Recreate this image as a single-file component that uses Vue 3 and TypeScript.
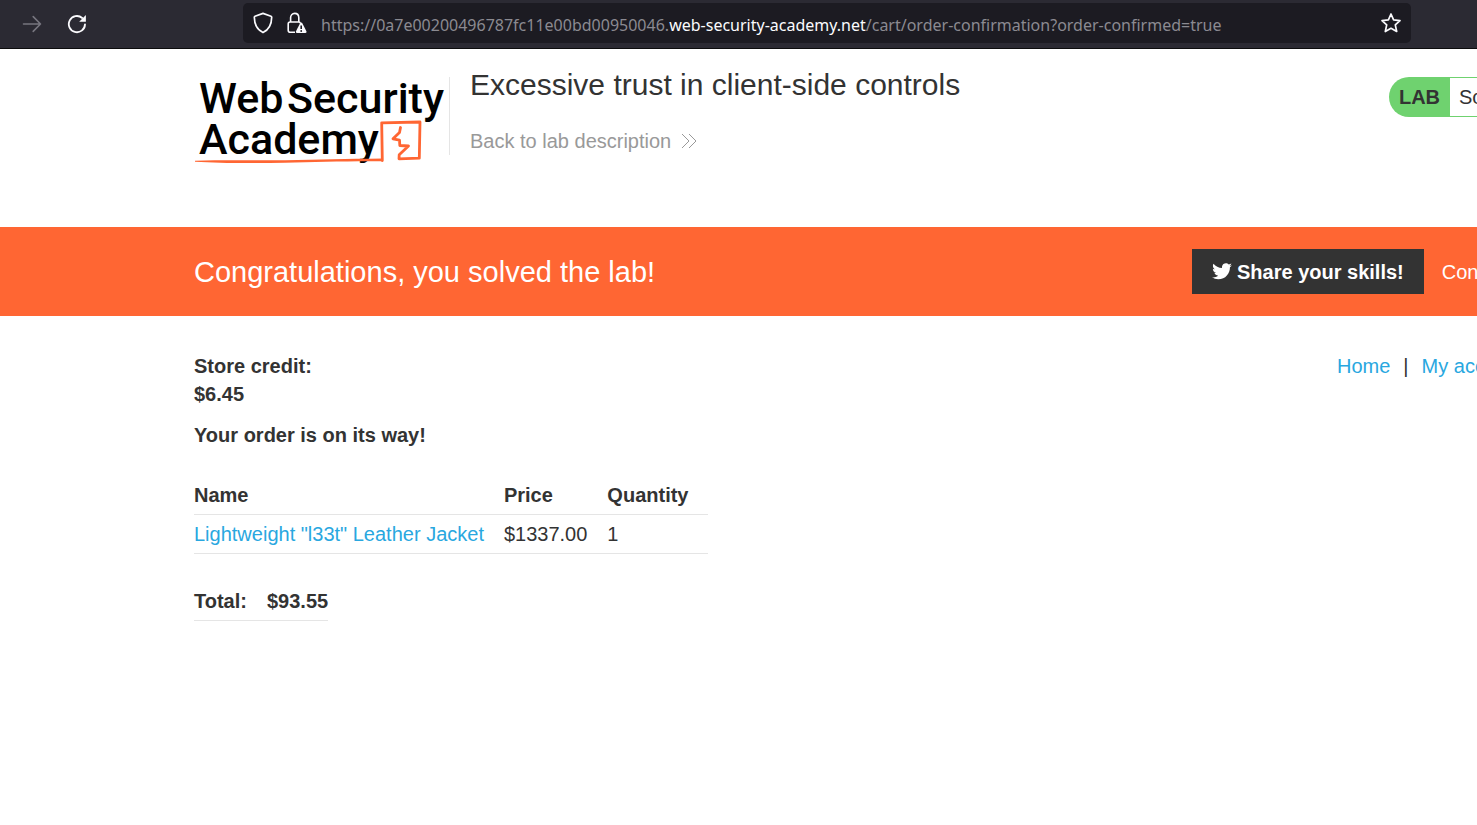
<script setup lang="ts">
interface OrderLine {
  name: string
  price: string
  quantity: number
}

const url = {
  prefix: 'https://0a7e00200496787fc11e00bd00950046.',
  domain: 'web-security-academy.net',
  path: '/cart/order-confirmation?order-confirmed=true',
}

const storeCredit = '$6.45'
const total = '$93.55'
const lines: OrderLine[] = [
  { name: 'Lightweight "l33t" Leather Jacket', price: '$1337.00', quantity: 1 },
]
</script>

<template>
  <div class="window">
    <nav class="toolbar" aria-label="Browser toolbar">
      <div class="nav-buttons">
        <button type="button" class="icon-button" aria-label="Forward" disabled>
          <svg width="20" height="20" viewBox="0 0 20 20" fill="none" stroke="#77767f" stroke-width="1.6" stroke-linecap="round" stroke-linejoin="round">
            <path d="M1.5 10H18.5M11.2 2.600L18.500 10L11.200 17.400" />
          </svg>
        </button>
        <button type="button" class="icon-button" aria-label="Reload">
          <svg width="20" height="20" viewBox="0 0 20 20" fill="none" stroke="#fbfbfe" stroke-width="1.8" stroke-linecap="round">
            <path d="M18 10.400A8.100 8.100 0 1 1 15.200 4" />
            <path d="M18.900 1V7.700H12.200Z" fill="#fbfbfe" stroke="none" />
          </svg>
        </button>
      </div>
      <div class="address-bar">
        <button type="button" class="icon-button" aria-label="Tracking protection">
          <svg width="20" height="22" viewBox="0 0 20 22" fill="none" stroke="#fbfbfe" stroke-width="1.7" stroke-linejoin="round">
            <path d="M10 1.4L18 4.2C18.5 4.4 18.7 4.8 18.7 5.3C18.6 12 16.4 17.6 10 20.6C3.6 17.6 1.4 12 1.3 5.3C1.3 4.8 1.5 4.4 2 4.2Z" />
          </svg>
        </button>
        <button type="button" class="icon-button" aria-label="Connection security">
          <svg width="20" height="22" viewBox="0 0 20 22" fill="none">
            <path d="M8 20.2H3.2C2 20.2 1.2 19.4 1.2 18.2V12C1.2 10.8 2 10 3.2 10H11.6C12.4 10 13 10.4 13.4 11" stroke="#fbfbfe" stroke-width="1.6" />
            <path d="M3.6 10V5.8C3.6 3.3 5.2 1.4 7.7 1.4C10.2 1.4 11.8 3.3 11.8 5.8V10" stroke="#fbfbfe" stroke-width="1.6" />
            <path d="M13.2 11.1C13.7 10.2 14.7 10.2 15.2 11.1L19.4 19.3C19.8 20.1 19.3 21 18.4 21H10C9.1 21 8.6 20.1 9 19.3Z" fill="#fbfbfe" />
            <path d="M14.2 13.6V17" stroke="#1c1b22" stroke-width="1.6" />
            <circle cx="14.2" cy="19" r="0.9" fill="#1c1b22" />
          </svg>
        </button>
        <div class="url" role="textbox" aria-label="Address" contenteditable="true" spellcheck="false">{{ url.prefix }}<span class="domain">{{ url.domain }}</span>{{ url.path }}</div>
        <button type="button" class="icon-button" aria-label="Bookmark this page">
          <svg width="22" height="22" viewBox="0 0 22 22" fill="none" stroke="#fbfbfe" stroke-width="1.7" stroke-linejoin="round">
            <path d="M11 2L13.6 7.9L20 8.6L15.3 12.9L16.7 19.5L11 16.3L5.3 19.5L6.7 12.9L2 8.6L8.4 7.9Z" />
          </svg>
        </button>
      </div>
    </nav>

    <header class="lab-header">
      <a href="#" class="logo" aria-label="Web Security Academy">
        <svg width="250" height="92" viewBox="0 0 250 92">
          <g class="logo-text">
            <text x="4" y="36">Web</text>
            <text x="92" y="36">Security</text>
            <text x="4" y="77">Academy</text>
          </g>
          <path d="M187.300 83.500L186.700 45.800L225 45L224.300 81.200L204 81.800L204.200 77.700L213.500 69L204.800 68.500L204.500 63.200L198 61.800L204.500 55.500L205.500 50.500" fill="none" stroke="#ff6633" stroke-width="2.8" stroke-linejoin="round" stroke-linecap="round" />
          <path d="M0 83.800C30 82.800 60 83.600 90 83.200C125 82.800 150 82 188 81.600V84.300C150 84 120 85.200 90 85.800C60 86.200 25 86.400 0 84.800Z" fill="#ff6633" />
        </svg>
      </a>
      <div class="title">
        <h2>Excessive trust in client-side controls</h2>
        <a href="#" class="back-link">Back to lab description
          <svg width="16" height="16" viewBox="0 0 16 16" fill="none" stroke="#999999" stroke-width="1">
            <path d="M1 1L8 8L1 15M8 1L15 8L8 15" />
          </svg>
        </a>
      </div>
      <div class="status edge">
        <span class="status-label">LAB</span>
        <p class="status-value">Solved</p>
      </div>
    </header>

    <section class="banner">
      <h4>Congratulations, you solved the lab!</h4>
      <div class="banner-actions edge">
        <button type="button" class="share">
          <svg width="20" height="17" viewBox="0 0 24 20" fill="#ffffff">
            <path d="M24 2.400C23.100 2.800 22.200 3 21.200 3.200C22.200 2.500 23 1.500 23.300 .4C22.400 1 21.300 1.400 20.200 1.600C18.400-.4 15.600-.5 13.700 1.100C12.300 2.300 11.700 4.100 12.100 5.900C8 5.700 4.300 3.700 1.800 .7C.4 3 1.200 5.900 3.300 7.300C2.500 7.200 1.700 7 1 6.600C1 9 2.700 11.100 5 11.500C4.300 11.700 3.500 11.700 2.800 11.600C3.400 13.500 5.200 15 7.400 15C5.300 16.600 2.700 17.300 0 17C2.200 18.400 4.800 19.300 7.500 19.300C16.700 19.300 21.800 11.500 21.500 4.800C22.500 4.200 23.300 3.300 24 2.400Z" />
          </svg>
          Share your skills!
        </button>
        <a href="#" class="continue">Continue shopping</a>
      </div>
    </section>

    <main class="content">
      <div class="account-row">
        <p class="credit"><strong>Store credit:<br>{{ storeCredit }}</strong></p>
        <nav class="links edge" aria-label="Account">
          <a href="#">Home</a><span>|</span><a href="#">My account</a>
        </nav>
      </div>
      <p class="notice"><strong>Your order is on its way!</strong></p>
      <table class="order">
        <thead>
          <tr><th scope="col">Name</th><th scope="col">Price</th><th scope="col">Quantity</th></tr>
        </thead>
        <tbody>
          <tr v-for="line in lines" :key="line.name">
            <td><a href="#">{{ line.name }}</a></td>
            <td>{{ line.price }}</td>
            <td>{{ line.quantity }}</td>
          </tr>
        </tbody>
      </table>
      <table class="total">
        <tbody>
          <tr><th scope="row">Total:</th><th>{{ total }}</th></tr>
        </tbody>
      </table>
    </main>
  </div>
</template>

<style>
body {
  margin: 0;
  background: #ffffff;
}
</style>

<style scoped>
.window {
  min-height: 100vh;
  overflow: hidden;
  color: #333333;
  font: 20px/28px "Liberation Sans", Arial, sans-serif;
}

h2, h4, p {
  margin: 0;
  font-weight: normal;
}

a {
  color: #29a7df;
  text-decoration: none;
}

button {
  border: 0;
  padding: 0;
  font: inherit;
  background: none;
}

svg {
  display: block;
  flex: none;
}

.toolbar {
  display: flex;
  box-sizing: border-box;
  height: 49px;
  padding: 3px 66px 5px 22px;
  border-bottom: 1px solid #0c0c0d;
  background: #2b2a33;
}

.nav-buttons {
  display: flex;
  flex: 0 0 221px;
  align-items: center;
  gap: 25px;
  padding-top: 2px;
}

.address-bar {
  display: flex;
  flex: 1;
  min-width: 0;
  align-items: center;
  padding: 0 9px 0 10px;
  gap: 14px;
  border-radius: 5px;
  background: #1c1b22;
}

.url {
  flex: 1;
  min-width: 0;
  padding-top: 4px;
  overflow: hidden;
  color: #8b8a91;
  font: 16px/28px "Noto Sans", sans-serif;
  white-space: nowrap;
  outline: none;
}

.domain {
  color: #fbfbfe;
}

.edge {
  flex-shrink: 0;
  margin-left: auto;
  white-space: nowrap;
}

.lab-header {
  display: flex;
  align-items: flex-start;
  height: 150px;
  padding: 28px 0 0 195px;
}

.logo {
  flex: none;
  margin-right: 4px;
}

.logo-text {
  fill: #000000;
  font: 500 43px Roboto, sans-serif;
}

.title {
  display: flex;
  flex-direction: column;
  height: 78px;
  gap: 20px;
  padding-left: 20px;
  border-left: 1px solid #e5e5e5;
}

.title h2 {
  margin-top: -8px;
  font-size: 30px;
  line-height: 32px;
}

.back-link {
  display: flex;
  align-items: center;
  gap: 10px;
  margin-top: 6px;
  color: #999999;
}

.status {
  display: flex;
  width: 88px;
}

.status-label {
  flex: none;
  width: 61px;
  border-radius: 20px 0 0 20px;
  background: #6fd26f;
  font-weight: bold;
  line-height: 40px;
  text-align: center;
}

.status-value {
  flex: none;
  box-sizing: border-box;
  height: 40px;
  padding: 0 20px 0 9px;
  border: 1px solid #6fd26f;
  border-left: 0;
  line-height: 38px;
}

.banner {
  display: flex;
  align-items: center;
  height: 89px;
  padding-left: 194px;
  color: #ffffff;
  background: #ff6633;
}

.banner h4 {
  font-size: 29px;
  line-height: 32px;
}

.banner-actions {
  display: flex;
  align-items: center;
  width: 285px;
  gap: 18px;
  line-height: 26px;
}

.share {
  display: flex;
  flex: none;
  align-items: center;
  height: 45px;
  padding: 0 20px;
  gap: 5px;
  color: #ffffff;
  background: #333333;
  font-weight: bold;
}

.continue {
  color: #ffffff;
}

.content {
  padding: 36px 0 0 194px;
}

.account-row {
  display: flex;
  align-items: flex-start;
}

.links {
  display: flex;
  width: 140px;
  gap: 13px;
}

.notice {
  margin: 13px 0 27px;
}

table {
  border-collapse: separate;
  border-spacing: 0;
}

th, td {
  padding: 5px 20px 5px 0;
  border-bottom: 1px solid #e5e5e5;
  text-align: left;
}

.total {
  margin-top: 28px;
}

.total th:last-child {
  padding-right: 0;
}
</style>
